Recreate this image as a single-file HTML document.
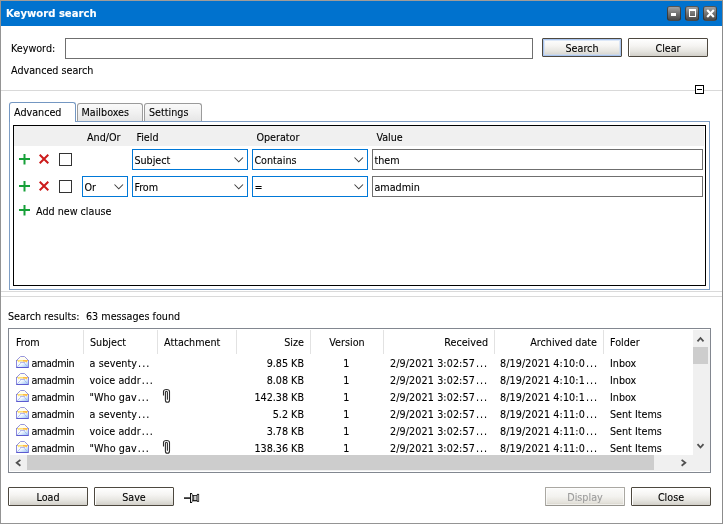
<!DOCTYPE html>
<html>
<head>
<meta charset="utf-8">
<title>Keyword search</title>
<style>
html,body{margin:0;padding:0;}
body{width:723px;height:524px;overflow:hidden;background:#fff;position:relative;
 font-family:"DejaVu Sans Condensed","DejaVu Sans","Liberation Sans",sans-serif;font-size:10.7px;font-stretch:condensed;color:#000;-webkit-text-stroke:0.1px currentColor;}
.a{position:absolute;}
.t{position:absolute;white-space:nowrap;line-height:13px;height:13px;}
#root{position:absolute;left:0;top:0;width:723px;height:524px;will-change:transform;}
.r{text-align:right;}
.c{text-align:center;}
#title{position:absolute;left:1px;top:1px;width:721px;height:25px;background:#0072ce;}
#title .cap{position:absolute;left:5px;top:6px;color:#fff;font-weight:bold;font-size:11.2px;line-height:14px;white-space:nowrap;}
.wb{position:absolute;top:5px;width:14px;height:15px;border-radius:3px;box-sizing:border-box;border:1px solid rgba(45,45,45,0.75);border-top-color:rgba(90,90,90,0.7);background:linear-gradient(#a2a2a2 0%,#787878 45%,#484848 100%);}
.btn{position:absolute;box-sizing:border-box;height:19px;width:80px;border:1px solid #4d483f;border-radius:1px;background:linear-gradient(#ffffff 0%,#f5f4f2 40%,#e6e5e0 72%,#d2d0c9 100%);box-shadow:inset 1px 1px 0 #fff;text-align:center;line-height:19px;white-space:nowrap;}
.btn.def{box-shadow:inset 0 0 0 1px #a9c4ee,inset 0 0 0 2px rgba(200,218,245,0.6);}
.btn.dis{color:#9c9c9c;border-color:#aaa8a2;border-bottom-color:#96948e;background:linear-gradient(#fbfbfa 0%,#f3f2ef 50%,#e4e2db 85%,#d6d3ca 100%);box-shadow:inset 0 0 0 1px rgba(255,255,255,0.6);}
.inp{position:absolute;background:#fff;border:1px solid #6f6f6f;box-sizing:border-box;}
.sel{position:absolute;background:#fff;border:1px solid #0078d7;box-sizing:border-box;height:21px;}
.sel span{position:absolute;left:1.4px;top:4px;line-height:13px;white-space:nowrap;}
.sel svg{position:absolute;right:3px;top:7px;}
.tab{position:absolute;box-sizing:border-box;border:1px solid #9b9b9b;border-bottom:none;border-radius:3px 3px 0 0;background:linear-gradient(#fafafa,#f1f1f1 50%,#e6e6e6);}
.tab span{position:absolute;top:3px;line-height:13px;white-space:nowrap;}
.dt{letter-spacing:0.1px;}
.fr{letter-spacing:-0.4px;}
.el{letter-spacing:1px;margin-left:1px;}
.su{letter-spacing:0.05px;}
.cs{position:absolute;top:330px;width:1px;height:24px;background:#e2e2e2;}
</style>
</head>
<body>
<div id="root">
<div class="a" style="left:0;top:0;width:721px;height:522px;border:1px solid #949494;border-top-color:#a09c98;border-right-color:#8c8c8c"></div>
<div id="title"><div class="cap">Keyword search</div>
<div class="wb" style="left:666px"><div class="a" style="left:3px;top:6px;width:5px;height:3px;background:#fff"></div></div>
<div class="wb" style="left:684px"><div class="a" style="left:3px;top:2px;width:5px;height:5px;border:1px solid #fff;border-top-width:2px"></div></div>
<div class="wb" style="left:702px"><svg class="a" style="left:2px;top:2px" width="9" height="9" viewBox="0 0 9 9"><path d="M1.2 1L7.8 8M7.8 1L1.2 8" stroke="#fff" stroke-width="2.1" fill="none"/></svg></div>
</div>
<div class="t" style="left:11px;top:42px">Keyword:</div>
<div class="inp" style="left:65px;top:38px;width:468px;height:21px"></div>
<div class="btn def" style="left:542px;top:38px">Search</div>
<div class="btn" style="left:628px;top:38px">Clear</div>
<div class="t" style="left:11px;top:64px">Advanced search</div>
<div class="a" style="left:1px;top:90px;width:721px;height:1px;background:#d9d9d9"></div>
<div class="a" style="left:695px;top:85px;width:9px;height:9px;box-sizing:border-box;border:1px solid #000;background:#fff"><div class="a" style="left:1px;top:3px;width:5px;height:1px;background:#000"></div></div>
<div class="a" style="left:9px;top:121px;width:701px;height:169px;box-sizing:border-box;border:1px solid #7f9ec4;background:#fff"></div>
<div class="tab" style="left:77px;top:103px;width:66px;height:18px"><span style="left:3.5px;top:2px">Mailboxes</span></div>
<div class="tab" style="left:144px;top:103px;width:58px;height:18px"><span style="left:4px;top:2px">Settings</span></div>
<div class="tab" style="left:9px;top:102px;width:67px;height:20px;background:#fff;border-color:#7497c2"><span style="left:4px;top:3px">Advanced</span></div>
<div class="a" style="left:13px;top:125px;width:693px;height:161px;box-sizing:border-box;border:1px solid #000;background:#fff"></div>
<div class="a" style="left:14px;top:126px;width:690px;height:20px;background:#f0f0f0"></div>
<div class="t" style="left:87px;top:131px">And/Or</div>
<div class="t" style="left:136.4px;top:131px">Field</div>
<div class="t" style="left:256.4px;top:131px">Operator</div>
<div class="t" style="left:376.4px;top:131px">Value</div>
<svg class="a" style="left:18.5px;top:154px" width="11" height="11" viewBox="0 0 11 11"><path d="M5.5 0V10.6M0 5H11" stroke="#16a038" stroke-width="2" fill="none"/></svg>
<svg class="a" style="left:39px;top:154px" width="10" height="10" viewBox="0 0 10 10"><path d="M0.7 0.7L9.3 9.3M9.3 0.7L0.7 9.3" stroke="#cc1b1b" stroke-width="2" fill="none"/></svg>
<div class="a" style="left:59px;top:153px;width:13px;height:13px;box-sizing:border-box;border:1px solid #333;background:#fff"></div>
<svg class="a" style="left:18.5px;top:181px" width="11" height="11" viewBox="0 0 11 11"><path d="M5.5 0V10.6M0 5H11" stroke="#16a038" stroke-width="2" fill="none"/></svg>
<svg class="a" style="left:39px;top:181px" width="10" height="10" viewBox="0 0 10 10"><path d="M0.7 0.7L9.3 9.3M9.3 0.7L0.7 9.3" stroke="#cc1b1b" stroke-width="2" fill="none"/></svg>
<div class="a" style="left:59px;top:180px;width:13px;height:13px;box-sizing:border-box;border:1px solid #333;background:#fff"></div>
<div class="sel" style="left:132px;top:149px;width:116px"><span>Subject</span><svg width="10" height="6" viewBox="0 0 10 6"><path d="M0.5 0.5L4.75 4.75L9 0.5" fill="none" stroke="#3e3e3e" stroke-width="1.05"/></svg></div>
<div class="sel" style="left:252px;top:149px;width:116px"><span>Contains</span><svg width="10" height="6" viewBox="0 0 10 6"><path d="M0.5 0.5L4.75 4.75L9 0.5" fill="none" stroke="#3e3e3e" stroke-width="1.05"/></svg></div>
<div class="inp" style="left:372px;top:149px;width:331px;height:21px"><span class="t" style="left:1.4px;top:4px">them</span></div>
<div class="sel" style="left:82px;top:176px;width:46px"><span>Or</span><svg width="10" height="6" viewBox="0 0 10 6"><path d="M0.5 0.5L4.75 4.75L9 0.5" fill="none" stroke="#3e3e3e" stroke-width="1.05"/></svg></div>
<div class="sel" style="left:132px;top:176px;width:116px"><span>From</span><svg width="10" height="6" viewBox="0 0 10 6"><path d="M0.5 0.5L4.75 4.75L9 0.5" fill="none" stroke="#3e3e3e" stroke-width="1.05"/></svg></div>
<div class="sel" style="left:252px;top:176px;width:116px"><span>=</span><svg width="10" height="6" viewBox="0 0 10 6"><path d="M0.5 0.5L4.75 4.75L9 0.5" fill="none" stroke="#3e3e3e" stroke-width="1.05"/></svg></div>
<div class="inp" style="left:372px;top:176px;width:331px;height:21px"><span class="t" style="left:1.4px;top:4px">amadmin</span></div>
<svg class="a" style="left:18.5px;top:205px" width="11" height="11" viewBox="0 0 11 11"><path d="M5.5 0V10.6M0 5H11" stroke="#16a038" stroke-width="2" fill="none"/></svg>
<div class="t" style="left:36px;top:205px">Add new clause</div>
<div class="a" style="left:1px;top:291px;width:721px;height:1px;background:#dadada"></div>
<div class="a" style="left:1px;top:296px;width:721px;height:1px;background:#dadada"></div>
<div class="t" style="left:8px;top:310px">Search results:</div>
<div class="t" style="left:86px;top:310px">63 messages found</div>
<div class="a" style="left:8px;top:328px;width:703px;height:145px;box-sizing:border-box;border:1px solid #828790;background:#fff"></div>
<div class="cs" style="left:83px"></div>
<div class="cs" style="left:157px"></div>
<div class="cs" style="left:236px"></div>
<div class="cs" style="left:310px"></div>
<div class="cs" style="left:383px"></div>
<div class="cs" style="left:494px"></div>
<div class="cs" style="left:603px"></div>
<div class="t" style="left:16px;top:336px">From</div>
<div class="t" style="left:90px;top:336px">Subject</div>
<div class="t" style="left:164px;top:336px">Attachment</div>
<div class="t r" style="left:244px;top:336px;width:60px">Size</div>
<div class="t c" style="left:311px;top:336px;width:72px">Version</div>
<div class="t r" style="left:388px;top:336px;width:100px">Received</div>
<div class="t r" style="left:497px;top:336px;width:100px">Archived date</div>
<div class="t" style="left:610px;top:336px">Folder</div>
<svg class="a" style="left:16px;top:356px" width="13" height="12" viewBox="0 0 13 12"><defs><linearGradient id="eg" x1="0" y1="0" x2="1" y2="1"><stop offset="0" stop-color="#ffffff"/><stop offset="0.45" stop-color="#f4f9ff"/><stop offset="1" stop-color="#8fbcf2"/></linearGradient></defs>
<path d="M0.5 4.5L4.5 0.5H8.5L12.5 4.5Z" fill="#fffdf0" stroke="#8b8ada" stroke-width="0.9"/>
<rect x="0.5" y="4.5" width="12" height="7" fill="url(#eg)" stroke="#7f7dd8" stroke-width="0.9"/>
<path d="M0.6 11.5H12.4" stroke="#5c5ad0" stroke-width="1"/>
<path d="M1 4H12L10.4 6.6L9.4 5.5H3.6L2.6 6.6Z" fill="#ffe272"/>
<path d="M7 4H12L10.4 6.6L9.4 5.5H7Z" fill="#ffbb45"/>
<path d="M4 6.4H9" stroke="#9a9ae2" stroke-width="0.8"/>
<path d="M1.2 10.8L4.6 7.4M11.8 10.8L8.4 7.4" fill="none" stroke="#9db4ee" stroke-width="0.8"/>
</svg>
<div class="t fr" style="left:31.6px;top:357px">amadmin</div>
<div class="t su" style="left:89.6px;top:357px">a seventy<span class="el">...</span></div>
<div class="t r" style="left:244px;top:357px;width:60px">9.85 KB</div>
<div class="t c" style="left:310.4px;top:357px;width:72px">1</div>
<div class="t dt" style="left:390px;top:357px">2/9/2021 3:02:57<span class="el">...</span></div>
<div class="t dt" style="left:500px;top:357px">8/19/2021 4:10:0<span class="el">...</span></div>
<div class="t" style="left:610px;top:357px">Inbox</div>
<svg class="a" style="left:16px;top:373px" width="13" height="12" viewBox="0 0 13 12">
<path d="M0.5 4.5L4.5 0.5H8.5L12.5 4.5Z" fill="#fffdf0" stroke="#8b8ada" stroke-width="0.9"/>
<rect x="0.5" y="4.5" width="12" height="7" fill="url(#eg)" stroke="#7f7dd8" stroke-width="0.9"/>
<path d="M0.6 11.5H12.4" stroke="#5c5ad0" stroke-width="1"/>
<path d="M1 4H12L10.4 6.6L9.4 5.5H3.6L2.6 6.6Z" fill="#ffe272"/>
<path d="M7 4H12L10.4 6.6L9.4 5.5H7Z" fill="#ffbb45"/>
<path d="M4 6.4H9" stroke="#9a9ae2" stroke-width="0.8"/>
<path d="M1.2 10.8L4.6 7.4M11.8 10.8L8.4 7.4" fill="none" stroke="#9db4ee" stroke-width="0.8"/>
</svg>
<div class="t fr" style="left:31.6px;top:374px">amadmin</div>
<div class="t su" style="left:89.6px;top:374px">voice addr<span class="el">...</span></div>
<div class="t r" style="left:244px;top:374px;width:60px">8.08 KB</div>
<div class="t c" style="left:310.4px;top:374px;width:72px">1</div>
<div class="t dt" style="left:390px;top:374px">2/9/2021 3:02:57<span class="el">...</span></div>
<div class="t dt" style="left:500px;top:374px">8/19/2021 4:10:1<span class="el">...</span></div>
<div class="t" style="left:610px;top:374px">Inbox</div>
<svg class="a" style="left:16px;top:390px" width="13" height="12" viewBox="0 0 13 12">
<path d="M0.5 4.5L4.5 0.5H8.5L12.5 4.5Z" fill="#fffdf0" stroke="#8b8ada" stroke-width="0.9"/>
<rect x="0.5" y="4.5" width="12" height="7" fill="url(#eg)" stroke="#7f7dd8" stroke-width="0.9"/>
<path d="M0.6 11.5H12.4" stroke="#5c5ad0" stroke-width="1"/>
<path d="M1 4H12L10.4 6.6L9.4 5.5H3.6L2.6 6.6Z" fill="#ffe272"/>
<path d="M7 4H12L10.4 6.6L9.4 5.5H7Z" fill="#ffbb45"/>
<path d="M4 6.4H9" stroke="#9a9ae2" stroke-width="0.8"/>
<path d="M1.2 10.8L4.6 7.4M11.8 10.8L8.4 7.4" fill="none" stroke="#9db4ee" stroke-width="0.8"/>
</svg>
<div class="t fr" style="left:31.6px;top:391px">amadmin</div>
<div class="t su" style="left:89.6px;top:391px">"Who gav<span class="el">...</span></div>
<svg class="a" style="left:162px;top:388px" width="9" height="15" viewBox="0 0 9 15"><path d="M1.5 7.5V3.5Q1.5 1.5 4.5 1.5Q7.5 1.5 7.5 3.5V12Q7.5 14.3 5.4 14.3Q3.4 14.3 3.4 12V4.5Q3.4 3.3 4.4 3.3Q5.4 3.3 5.4 4.5V11.7" fill="none" stroke="#2c2c2c" stroke-width="1.1"/></svg>
<div class="t r" style="left:244px;top:391px;width:60px">142.38 KB</div>
<div class="t c" style="left:310.4px;top:391px;width:72px">1</div>
<div class="t dt" style="left:390px;top:391px">2/9/2021 3:02:57<span class="el">...</span></div>
<div class="t dt" style="left:500px;top:391px">8/19/2021 4:10:1<span class="el">...</span></div>
<div class="t" style="left:610px;top:391px">Inbox</div>
<svg class="a" style="left:16px;top:407px" width="13" height="12" viewBox="0 0 13 12">
<path d="M0.5 4.5L4.5 0.5H8.5L12.5 4.5Z" fill="#fffdf0" stroke="#8b8ada" stroke-width="0.9"/>
<rect x="0.5" y="4.5" width="12" height="7" fill="url(#eg)" stroke="#7f7dd8" stroke-width="0.9"/>
<path d="M0.6 11.5H12.4" stroke="#5c5ad0" stroke-width="1"/>
<path d="M1 4H12L10.4 6.6L9.4 5.5H3.6L2.6 6.6Z" fill="#ffe272"/>
<path d="M7 4H12L10.4 6.6L9.4 5.5H7Z" fill="#ffbb45"/>
<path d="M4 6.4H9" stroke="#9a9ae2" stroke-width="0.8"/>
<path d="M1.2 10.8L4.6 7.4M11.8 10.8L8.4 7.4" fill="none" stroke="#9db4ee" stroke-width="0.8"/>
</svg>
<div class="t fr" style="left:31.6px;top:408px">amadmin</div>
<div class="t su" style="left:89.6px;top:408px">a seventy<span class="el">...</span></div>
<div class="t r" style="left:244px;top:408px;width:60px">5.2 KB</div>
<div class="t c" style="left:310.4px;top:408px;width:72px">1</div>
<div class="t dt" style="left:390px;top:408px">2/9/2021 3:02:57<span class="el">...</span></div>
<div class="t dt" style="left:500px;top:408px">8/19/2021 4:11:0<span class="el">...</span></div>
<div class="t" style="left:610px;top:408px">Sent Items</div>
<svg class="a" style="left:16px;top:424px" width="13" height="12" viewBox="0 0 13 12">
<path d="M0.5 4.5L4.5 0.5H8.5L12.5 4.5Z" fill="#fffdf0" stroke="#8b8ada" stroke-width="0.9"/>
<rect x="0.5" y="4.5" width="12" height="7" fill="url(#eg)" stroke="#7f7dd8" stroke-width="0.9"/>
<path d="M0.6 11.5H12.4" stroke="#5c5ad0" stroke-width="1"/>
<path d="M1 4H12L10.4 6.6L9.4 5.5H3.6L2.6 6.6Z" fill="#ffe272"/>
<path d="M7 4H12L10.4 6.6L9.4 5.5H7Z" fill="#ffbb45"/>
<path d="M4 6.4H9" stroke="#9a9ae2" stroke-width="0.8"/>
<path d="M1.2 10.8L4.6 7.4M11.8 10.8L8.4 7.4" fill="none" stroke="#9db4ee" stroke-width="0.8"/>
</svg>
<div class="t fr" style="left:31.6px;top:425px">amadmin</div>
<div class="t su" style="left:89.6px;top:425px">voice addr<span class="el">...</span></div>
<div class="t r" style="left:244px;top:425px;width:60px">3.78 KB</div>
<div class="t c" style="left:310.4px;top:425px;width:72px">1</div>
<div class="t dt" style="left:390px;top:425px">2/9/2021 3:02:57<span class="el">...</span></div>
<div class="t dt" style="left:500px;top:425px">8/19/2021 4:11:0<span class="el">...</span></div>
<div class="t" style="left:610px;top:425px">Sent Items</div>
<svg class="a" style="left:16px;top:441px" width="13" height="12" viewBox="0 0 13 12">
<path d="M0.5 4.5L4.5 0.5H8.5L12.5 4.5Z" fill="#fffdf0" stroke="#8b8ada" stroke-width="0.9"/>
<rect x="0.5" y="4.5" width="12" height="7" fill="url(#eg)" stroke="#7f7dd8" stroke-width="0.9"/>
<path d="M0.6 11.5H12.4" stroke="#5c5ad0" stroke-width="1"/>
<path d="M1 4H12L10.4 6.6L9.4 5.5H3.6L2.6 6.6Z" fill="#ffe272"/>
<path d="M7 4H12L10.4 6.6L9.4 5.5H7Z" fill="#ffbb45"/>
<path d="M4 6.4H9" stroke="#9a9ae2" stroke-width="0.8"/>
<path d="M1.2 10.8L4.6 7.4M11.8 10.8L8.4 7.4" fill="none" stroke="#9db4ee" stroke-width="0.8"/>
</svg>
<div class="t fr" style="left:31.6px;top:442px">amadmin</div>
<div class="t su" style="left:89.6px;top:442px">"Who gav<span class="el">...</span></div>
<svg class="a" style="left:162px;top:439px" width="9" height="15" viewBox="0 0 9 15"><path d="M1.5 7.5V3.5Q1.5 1.5 4.5 1.5Q7.5 1.5 7.5 3.5V12Q7.5 14.3 5.4 14.3Q3.4 14.3 3.4 12V4.5Q3.4 3.3 4.4 3.3Q5.4 3.3 5.4 4.5V11.7" fill="none" stroke="#2c2c2c" stroke-width="1.1"/></svg>
<div class="t r" style="left:244px;top:442px;width:60px">138.36 KB</div>
<div class="t c" style="left:310.4px;top:442px;width:72px">1</div>
<div class="t dt" style="left:390px;top:442px">2/9/2021 3:02:57<span class="el">...</span></div>
<div class="t dt" style="left:500px;top:442px">8/19/2021 4:11:0<span class="el">...</span></div>
<div class="t" style="left:610px;top:442px">Sent Items</div>
<div class="a" style="left:10px;top:455px;width:700px;height:16px;background:#f0f0f0"></div>
<div class="a" style="left:693px;top:330px;width:17px;height:125px;background:#f0f0f0"></div>
<div class="a" style="left:27px;top:455px;width:627px;height:15px;background:#cdcdcd"></div>
<div class="a" style="left:693px;top:347px;width:15px;height:17px;background:#cdcdcd"></div>
<svg class="a" style="left:696px;top:336px" width="9" height="8" viewBox="0 0 9 8"><path d="M1.5 5.3L4.5 2L7.5 5.3" fill="none" stroke="#505050" stroke-width="1.8"/></svg>
<svg class="a" style="left:696px;top:442px" width="9" height="8" viewBox="0 0 9 8"><path d="M1.5 2.2L4.5 5.5L7.5 2.2" fill="none" stroke="#505050" stroke-width="1.8"/></svg>
<svg class="a" style="left:14px;top:458px" width="8" height="9" viewBox="0 0 8 9"><path d="M6.4 1.9L2.7 4.8L6.4 7.7" fill="none" stroke="#505050" stroke-width="1.8"/></svg>
<svg class="a" style="left:680px;top:458px" width="8" height="9" viewBox="0 0 8 9"><path d="M1.6 1.9L5.3 4.8L1.6 7.7" fill="none" stroke="#505050" stroke-width="1.8"/></svg>
<div class="btn" style="left:8px;top:487px">Load</div>
<div class="btn" style="left:94px;top:487px">Save</div>
<div class="btn dis" style="left:545px;top:487px">Display</div>
<div class="btn" style="left:631px;top:487px">Close</div>
<svg class="a" style="left:183px;top:491px" width="18" height="14" viewBox="0 0 18 14">
<defs><linearGradient id="pg" x1="0" y1="0" x2="1" y2="0"><stop offset="0" stop-color="#555"/><stop offset="0.45" stop-color="#f2f2f2"/><stop offset="1" stop-color="#666"/></linearGradient></defs>
<rect x="1" y="6.3" width="6.2" height="1.6" fill="#1c1c1c"/>
<path d="M7 2H9.1V3H9.3Q10.4 5 10.4 7Q10.4 9 9.3 11H9.1V12H7Z" fill="#111"/>
<path d="M8 3.1H8.7Q9.5 5 9.5 7Q9.5 9 8.7 10.9H8Z" fill="#ececec"/>
<rect x="10" y="4" width="4.3" height="6.3" fill="#111"/>
<rect x="10.3" y="4.8" width="3.8" height="4.3" fill="url(#pg)"/>
<rect x="13.9" y="2.9" width="2.2" height="7.9" fill="#111"/>
<rect x="14.5" y="3.8" width="0.9" height="6" fill="#f4f4f4"/>
</svg>
</div>
</body>
</html>
